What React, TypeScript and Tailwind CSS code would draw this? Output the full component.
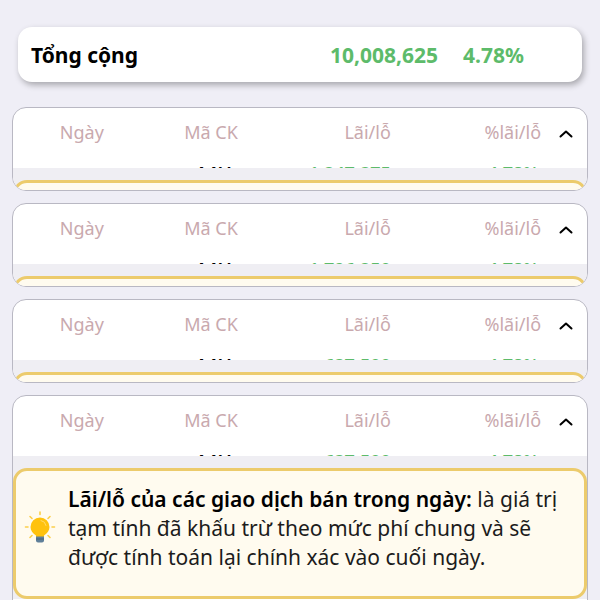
import { useState } from "react";

type Row = { code: string; profit: string; percent: string };

const rows: Row[] = [
  { code: "AAV", profit: "1,247,375", percent: "4.78%" },
  { code: "AAV", profit: "1,796,250", percent: "4.78%" },
  { code: "AAV", profit: "637,500", percent: "4.78%" },
  { code: "AAV", profit: "637,500", percent: "4.78%" },
];

function BulbIcon() {
  return (
    <svg viewBox="0 0 32 32" className="h-8 w-8 shrink-0" aria-hidden="true">
      <g stroke="#fbcf4b" strokeWidth="1.6" strokeLinecap="round">
        <path d="M16 1v2.500M6 5.500l2 2M26 5.500l-2 2M1.500 16h2.500M28 16h2.500M6 26.500l2-2M26 26.500l-2-2" />
      </g>
      <path
        d="M16 6.500a9.500 9.500 0 0 0-9.500 9.500c0 3.700 2.200 6.200 5.500 8.400V26h8v-1.600c3.300-2.200 5.500-4.700 5.500-8.400a9.500 9.500 0 0 0-9.500-9.500z"
        fill="#ffc20d"
      />
      <path d="M17 9.500a6 6 0 0 1 5 5" fill="none" stroke="#ffdb69" strokeWidth="1" strokeLinecap="round" />
      <path d="M12 25.500h8V29.500a2 2 0 0 1-2 2h-4a2 2 0 0 1-2-2z" fill="#5f7f99" />
      <path d="M12 28h8" stroke="#48657d" strokeWidth="1" />
    </svg>
  );
}

function Note() {
  return (
    <div className="flex items-center pt-[14px] pr-4 pb-6 pl-2">
      <div className="-mt-1">
        <BulbIcon />
      </div>
      <p className="ml-3 text-[21px] leading-[29px] text-[#1c1c1c]">
        <strong className="font-semibold text-black">Lãi/lỗ của các giao dịch bán trong ngày:</strong> là giá trị tạm
        tính đã khấu trừ theo mức phí chung và sẽ được tính toán lại chính xác vào cuối ngày.
      </p>
    </div>
  );
}

function TradeCard({ row, last }: { row: Row; last: boolean }) {
  const [open, setOpen] = useState(true);

  return (
    <section
      className={`overflow-hidden border border-[#b9b8c3] bg-white ${
        last ? "rounded-t-[14px] pb-3" : "h-[84px] rounded-[14px]"
      }`}
    >
      <div className="h-[60px] overflow-hidden">
        <table className="w-full table-fixed text-lg">
          <thead>
            <tr className="h-12 text-[#c9a9ae]">
              <th className="w-[24%] font-normal">Ngày</th>
              <th className="w-[21%] font-normal">Mã CK</th>
              <th className="w-[21%] pr-px text-right font-normal">Lãi/lỗ</th>
              <th className="w-[26%] text-right font-normal">%lãi/lỗ</th>
              <th className="pl-1">
                <button
                  type="button"
                  aria-label="Thu gọn"
                  aria-expanded={open}
                  onClick={() => setOpen(!open)}
                  className="block w-full pt-1"
                >
                  <svg viewBox="0 0 16 10" className="mx-auto h-[10px] w-4" aria-hidden="true">
                    <path
                      d="M2.500 7.500 8 2.500l5.500 5"
                      fill="none"
                      stroke="#000"
                      strokeWidth="2"
                      strokeLinecap="round"
                      strokeLinejoin="round"
                    />
                  </svg>
                </button>
              </th>
            </tr>
          </thead>
          <tbody>
            <tr className="leading-[34px] font-semibold text-[#5dbb6a]">
              <td />
              <td className="pl-1 text-center text-black">{row.code}</td>
              <td className="pr-px text-right">{row.profit}</td>
              <td className="pr-0.5 text-right">{row.percent}</td>
              <td />
            </tr>
          </tbody>
        </table>
      </div>
      <div className="bg-[#efeef3] pt-3">
        <div className="min-h-12 rounded-[14px] border-3 border-[#eccb6c] bg-[#fffbef]">{last && <Note />}</div>
      </div>
    </section>
  );
}

export default function App() {
  return (
    <main className="h-screen overflow-hidden bg-[#efeef6] px-3 pt-[27px] font-['Noto_Sans','Open_Sans',sans-serif] text-black">
      <div className="mx-[6px] flex h-[55px] items-center rounded-[14px] bg-white pt-0.5 pr-[58px] pl-[13px] text-[21px] font-bold shadow-[2px_3px_6px_rgba(0,0,0,0.3)]">
        <span>Tổng cộng</span>
        <span className="ml-auto text-[#5dbb6a]">10,008,625</span>
        <span className="ml-[25px] text-[#5dbb6a]">4.78%</span>
      </div>
      <div className="mt-[25px] flex flex-col gap-3">
        {rows.map((row, i) => (
          <TradeCard key={i} row={row} last={i === rows.length - 1} />
        ))}
      </div>
    </main>
  );
}
